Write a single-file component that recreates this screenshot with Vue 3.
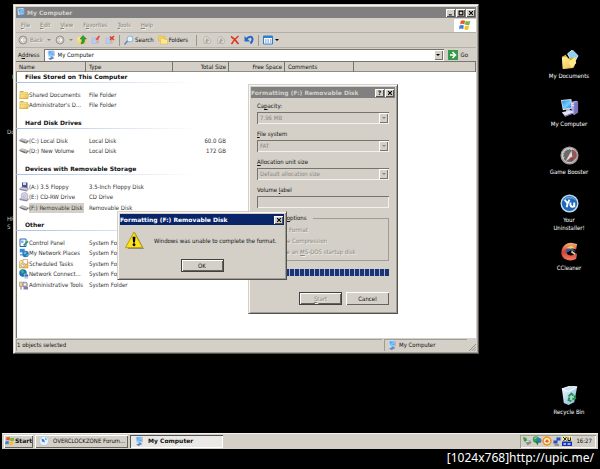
<template>
  <div class="screen">
    <svg class="sprite" aria-hidden="true">
      <defs>
        <linearGradient id="g-screen" x1="0" y1="0" x2="1" y2="1">
          <stop offset="0" stop-color="#2f7fe0" />
          <stop offset="0.55" stop-color="#6fd0fb" />
          <stop offset="1" stop-color="#2a6fd0" />
        </linearGradient>
        <linearGradient id="g-folder" x1="0" y1="0" x2="1" y2="1">
          <stop offset="0" stop-color="#fff3a0" />
          <stop offset="1" stop-color="#e8b840" />
        </linearGradient>
        <linearGradient id="g-bin" x1="0" y1="0" x2="1" y2="1">
          <stop offset="0" stop-color="#f4fbff" />
          <stop offset="1" stop-color="#7fb0dd" />
        </linearGradient>
        <linearGradient id="g-cc" x1="0" y1="0" x2="0" y2="1">
          <stop offset="0" stop-color="#f3b27c" />
          <stop offset="0.5" stop-color="#d8412a" />
          <stop offset="1" stop-color="#f07a68" />
        </linearGradient>
      </defs>

      <symbol id="computer" viewBox="0 0 20 20">
        <path d="M12 4l5-1 2 1v11l-4 3-3-2z" fill="#a9a4e0" />
        <path d="M15 5l4-1v11l-4 3z" fill="#7a74bd" />
        <path d="M12.500 6h2M12.500 8h2" stroke="#f5f4ff" />
        <path d="M1 2l11-1 1 10-10 2z" fill="#dcdff5" />
        <path d="M2 3l9-1 1 8-8.500 1.500z" fill="url(#g-screen)" />
        <path d="M6 12l4-1 1 3-4 1z" fill="#b8b6dd" />
        <path d="M2 15l9-2 4 2-10 4z" fill="#e2e2f4" />
        <path d="M5 19l10-4v1l-10 4z" fill="#8884bb" />
      </symbol>
      <symbol id="monitor" viewBox="0 0 20 20">
        <path d="M3 1l12-1 1 12-12 2z" fill="#cfdcf2" />
        <path d="M5 3l9-1 1 8-9 2z" fill="url(#g-screen)" />
        <path d="M15 1l2 2v9l-2 1z" fill="#8c9bc8" />
        <path d="M8 13l5-1 1 3-4 1z" fill="#7d9cd0" />
        <path d="M4 17l9-3 4 2-8 4z" fill="#5e86c4" />
      </symbol>
      <symbol id="folder" viewBox="0 0 20 20">
        <path d="M1 4l2-2h5l2 2h8v13h-16z" fill="#d9ab3c" />
        <path d="M2 5h15v11h-14z" fill="#fdf1a4" />
        <path d="M1 17l2-9h16l-1 9z" fill="url(#g-folder)" stroke="#c89a30" />
      </symbol>
      <symbol id="documents" viewBox="0 0 20 20">
        <path d="M8 4l5-4 6 6-5 9z" fill="#8fd0ee" stroke="#d4f0fb" />
        <path d="M2 7l4-2 3 4 4-1 3 3-1 7-12 2z" fill="#d9a935" />
        <path d="M2 8l4-1 10 7-2 5-11 1z" fill="url(#g-folder)" />
        <path d="M9 13l7-6 1 7-5 5z" fill="#ffe98a" />
      </symbol>
      <symbol id="gauge" viewBox="0 0 20 20">
        <circle cx="10" cy="10" r="9.500" fill="#9a9a9a" />
        <circle cx="10" cy="10" r="7.500" fill="#6a6a6a" stroke="#d8d8d8" />
        <path d="M4 13a6.500 6.500 0 0 1 9-9" fill="none" stroke="#c9c9c9" stroke-width="2" stroke-dasharray="2 1" />
        <path d="M14 5a6.500 6.500 0 0 1 2 8" fill="none" stroke="#c94040" stroke-width="2" />
        <path d="M6 16l6-11 1 6z" fill="#f2d7d7" />
        <path d="M10 12l2 5 2-4z" fill="#a33" />
      </symbol>
      <symbol id="uninstaller" viewBox="0 0 20 20">
        <circle cx="10" cy="10" r="9.500" fill="#c3d8ea" />
        <circle cx="10" cy="10" r="8" fill="#1b68b8" />
        <path d="M3 7a8 8 0 0 1 14 0 12 12 0 0 0-14 0z" fill="#63a9e0" />
        <path d="M5 6l3 4 2-4M8 10l-1 4M11 9v3q2 3 4 0v-3M15 12v2" fill="none" stroke="#fff" stroke-width="2" />
      </symbol>
      <symbol id="ccleaner" viewBox="0 0 20 20">
        <path d="M18 2l-1 6-4-1q-5-1-6 3 0 5 6 4l5-2-1 6q-6 3-12 0-5-4-3-10 3-8 11-7z" fill="url(#g-cc)" />
        <path d="M6 8l6-2 5 4-6-1-5 3z" fill="#3557a5" />
        <path d="M7 6l5-2 3 2-4 1z" fill="#f1d24c" />
        <path d="M12 10l4 3" stroke="#e8c89a" stroke-width="2" />
      </symbol>
      <symbol id="bin" viewBox="0 0 20 20">
        <path d="M2 3l7 2 9-4-3 16-6 3-5-2z" fill="url(#g-bin)" />
        <path d="M2 3l9-3 7 1-9 5z" fill="#c7e3f6" stroke="#fff" />
        <path d="M9 11l3-3 2 2M15 10l1 3-3 1M12 16l-3-1 1-3" fill="none" stroke="#1d9a38" stroke-width="2" />
      </symbol>
      <symbol id="drive" viewBox="0 0 20 20">
        <path d="M1 8l5-3 13 4v2l-4 4-5-1-9-4z" fill="#6e6e6e" />
        <path d="M1 8l5-3 13 4-5 3z" fill="#c4c4c4" />
        <path d="M12 13h3" stroke="#7d9a7d" stroke-width="2" />
      </symbol>
      <symbol id="floppy" viewBox="0 0 20 20">
        <path d="M6 1h11v11h-11z" fill="#4a4f9c" />
        <path d="M8 1h6v5h-6z" fill="#d7daf3" />
        <path d="M1 13l5-4 13 3v3l-4 4-14-3z" fill="#8f8fa8" />
        <path d="M1 13l5-2 13 2-4 3z" fill="#cfcfdf" />
      </symbol>
      <symbol id="cd" viewBox="0 0 20 20">
        <circle cx="11" cy="8" r="7" fill="#d8d8ea" stroke="#8c8cae" />
        <circle cx="11" cy="8" r="2" fill="#fff" stroke="#7c7c9c" />
        <path d="M1 13l5-2 13 2v3l-4 3-14-3z" fill="#8b8ba4" />
        <path d="M1 13l5-2 13 2-4 3z" fill="#c9c9da" />
      </symbol>
      <symbol id="panel" viewBox="0 0 20 20">
        <path d="M2 2h12v15h-12z" fill="#fff" stroke="#2c62b5" stroke-width="2" />
        <path d="M4 5h5v5h-5z" fill="#7db4ec" />
        <path d="M8 14l9-9 2 3-8 8z" fill="#2c9b6a" />
      </symbol>
      <symbol id="network" viewBox="0 0 20 20">
        <path d="M1 1h11v9h-11z" fill="#b9cfef" />
        <path d="M2 2h9v6h-9z" fill="#2f8ae0" />
        <circle cx="13" cy="12" r="6.500" fill="#2a76cc" />
        <path d="M9 9q4-4 6 0 0 4-4 4zM14 14l4-2q0 4-3 5z" fill="#56c7c5" />
        <path d="M2 12h5v3h-5z" fill="#7896c6" />
      </symbol>
      <symbol id="tasks" viewBox="0 0 20 20">
        <path d="M1 5l2-2h5l2 2h8v13h-17z" fill="url(#g-folder)" stroke="#b98a20" />
        <path d="M8 1h9v9h-9z" fill="#fff" stroke="#c06a2a" />
        <circle cx="8" cy="12" r="4" fill="#fdfdfd" stroke="#777" />
        <path d="M8 10v2h2" stroke="#b22" fill="none" />
      </symbol>
      <symbol id="connections" viewBox="0 0 20 20">
        <circle cx="8" cy="8" r="7.500" fill="#1e74b8" />
        <path d="M3 4q5-4 7 1-1 5-4 4zM9 10l4-3q2 4-2 7z" fill="#44b07e" />
        <path d="M10 10h9v7h-9z" fill="#cad9f2" />
        <path d="M11 11h7v4h-7z" fill="#2a6fd0" />
        <path d="M11 18h7" stroke="#667" />
      </symbol>
      <symbol id="tools" viewBox="0 0 20 20">
        <path d="M1 4h9v9h-9z" fill="#e0cf9a" stroke="#95814d" />
        <circle cx="12" cy="9" r="5" fill="#b9b9cf" stroke="#6e6e8c" />
        <circle cx="12" cy="9" r="2" fill="#fff" />
        <path d="M9 13h9v6h-9z" fill="#8d76b0" />
        <path d="M4 13v6" stroke="#887a52" stroke-width="2" />
      </symbol>
      <symbol id="flag" viewBox="0 0 20 20">
        <path d="M3 3q4-2 7 0l-1 6q-4-2-7 0z" fill="#e8562a" />
        <path d="M11 3q4 2 8 0l-2 7q-4 1-7-1z" fill="#7db833" />
        <path d="M1 11q4-2 7 0l-1 6q-4-2-7 0z" fill="#3c7fd8" />
        <path d="M10 11q3 2 7 0l-2 7q-4 1-6-1z" fill="#f4c128" />
      </symbol>
      <symbol id="back" viewBox="0 0 20 20">
        <circle cx="10" cy="10" r="8" fill="#c9c6be" stroke="#98958c" stroke-width="2" />
        <path d="M11 5l-5 5 5 5M6 10h9" fill="none" stroke="#fff" stroke-width="2" />
      </symbol>
      <symbol id="forward" viewBox="0 0 20 20">
        <circle cx="10" cy="10" r="8" fill="#c9c6be" stroke="#98958c" stroke-width="2" />
        <path d="M9 5l5 5-5 5M14 10h-9" fill="none" stroke="#fff" stroke-width="2" />
      </symbol>
      <symbol id="up" viewBox="0 0 20 20">
        <path d="M1 6l2-2h5l2 2h7v12h-16z" fill="url(#g-folder)" />
        <path d="M12 1l7 7h-4q1 8-5 10l-2-1q3-4 2-9h-4z" fill="#2fa32f" stroke="#16701a" />
      </symbol>
      <symbol id="cut" viewBox="0 0 20 20">
        <path d="M2 6h9v11h-9z" fill="#b9cdf0" stroke="#9fb3dc" />
        <path d="M9 9l6-8 3 1-4 9z" fill="#e05548" />
        <path d="M13 8l4 8-5 1z" fill="#e9a09a" />
      </symbol>
      <symbol id="cut-x" viewBox="0 0 20 20">
        <path d="M2 6h9v11h-9z" fill="#b9cdf0" stroke="#9fb3dc" />
        <path d="M13 8l3 8-4 1z" fill="#e9a09a" />
        <path d="M10 3l8 7M18 2l-8 8" stroke="#d83a2c" stroke-width="3" />
      </symbol>
      <symbol id="search" viewBox="0 0 20 20">
        <circle cx="12" cy="8" r="6" fill="#e3f3ff" stroke="#8fb2d6" stroke-width="2" />
        <path d="M7 12l-6 7" stroke="#5f86b5" stroke-width="3" />
      </symbol>
      <symbol id="folders" viewBox="0 0 20 20">
        <path d="M1 3l2-2h4l2 2h5v9h-13z" fill="#f1cf5c" stroke="#d9b04a" />
        <path d="M5 9l2-2h4l2 2h6v9h-14z" fill="#fbe98c" stroke="#d9b04a" />
      </symbol>
      <symbol id="move" viewBox="0 0 20 20">
        <path d="M3 8l3-5h5l2 4 5 3-2 7h-12z" fill="#dcd9d2" stroke="#a19e96" />
        <path d="M9 6l6 6h-4v4h-4v-4" fill="#aaa79f" />
      </symbol>
      <symbol id="delete" viewBox="0 0 20 20">
        <path d="M2 3q8 5 15 15M17 2q-8 6-14 16" fill="none" stroke="#e0331c" stroke-width="3" />
      </symbol>
      <symbol id="undo" viewBox="0 0 20 20">
        <path d="M5 8q5-6 10-4 5 5-2 13" fill="none" stroke="#2b66c9" stroke-width="4" />
        <path d="M1 2v11h11z" fill="#2b66c9" />
      </symbol>
      <symbol id="views" viewBox="0 0 20 20">
        <path d="M1 2h18v16h-18z" fill="#fff" stroke="#2f80cc" stroke-width="2" />
        <path d="M1 2h18v4h-18z" fill="#2f80cc" />
        <path d="M4 10h3M9 10h3M14 10h3M4 14h3M9 14h3M14 14h3" stroke="#3b88cf" stroke-width="2" />
      </symbol>
      <symbol id="go" viewBox="0 0 20 20">
        <path d="M0 0h20v20h-20z" fill="#37994a" />
        <path d="M4 10h10M9 4l6 6-6 6" fill="none" stroke="#fff" stroke-width="3" />
      </symbol>
      <symbol id="warning" viewBox="0 0 20 20">
        <path d="M11 2l9 17h-17z" fill="#8d8a80" />
        <path d="M9.500 1l9 16.500h-18z" fill="#fbe21b" stroke="#b79a10" stroke-linejoin="round" />
        <path d="M8 6h3l-.5 6h-2z" fill="#000" />
        <circle cx="9.500" cy="14.500" r="1.500" fill="#000" />
      </symbol>
      <symbol id="browser" viewBox="0 0 20 20">
        <circle cx="10" cy="10" r="9" fill="#e9f3fd" stroke="#a5bdd8" />
        <path d="M5 5l5 2 2 6-6-2zM12 3l4 4-3 1z" fill="#2f82d4" />
      </symbol>
      <symbol id="plug" viewBox="0 0 20 20">
        <path d="M2 2l7 2 1 6-6 1z" fill="#35a23c" />
        <path d="M6 10l10-2 3 6-8 5z" fill="#8a8d90" />
        <path d="M8 11l7-1" stroke="#f1f1f1" stroke-width="2" />
      </symbol>
      <symbol id="idm" viewBox="0 0 20 20">
        <circle cx="8" cy="7" r="6.500" fill="#2fa45a" />
        <circle cx="14" cy="9" r="5" fill="#3c74c8" />
        <path d="M6 10h8l-3 9z" fill="#1d8a2e" />
        <path d="M5 5l4-2" stroke="#d7f4b4" stroke-width="2" />
      </symbol>
      <symbol id="guard" viewBox="0 0 20 20">
        <circle cx="10" cy="10" r="9.500" fill="#f0952a" />
        <circle cx="10" cy="10" r="6" fill="#fff3d0" />
        <path d="M6 11l4-5 4 5-4 3z" fill="#d8701a" />
      </symbol>
      <symbol id="lan" viewBox="0 0 20 20">
        <path d="M7 1h12v10h-12zM1 7h12v10h-12z" fill="#c3cbe2" />
        <path d="M9 3h8v6h-8zM3 9h8v6h-8z" fill="#2f4fb0" />
        <path d="M5 18h9" stroke="#555" stroke-width="2" />
      </symbol>
      <symbol id="monitoring" viewBox="0 0 20 20">
        <path d="M0 0h20v20h-20z" fill="#ece6a0" />
        <path d="M0 11h20v9h-20z" fill="#1a2fb8" />
        <path d="M2 2l7 7M9 2l-6 8M12 3v6h5v-6" stroke="#222" stroke-width="2" fill="none" />
        <path d="M3 16h5M11 16h6" stroke="#cfe0ff" stroke-width="3" />
      </symbol>
    </svg>

    <main class="desktop">
      <span class="behind behind-1">I</span>
      <span class="behind behind-2">Do</span>
      <span class="behind behind-3">HP<br />S</span>

      <nav class="shortcuts">
        <a
          v-for="item in shortcuts"
          :key="item.icon"
          href="#"
          :class="['shortcut', { last: item.icon === 'bin' }]"
        >
          <svg><use :href="`#${item.icon}`" /></svg>
          <span>{{ item.label }}</span>
        </a>
      </nav>

      <section class="window explorer">
        <header class="title inactive">
          <svg class="icon"><use href="#monitor" /></svg>
          <h1>My Computer</h1>
          <button class="caption" aria-label="Minimize">
            <svg viewBox="0 0 8 8"><path d="M1 6.500h4" /></svg>
          </button>
          <button class="caption" aria-label="Maximize">
            <svg viewBox="0 0 8 8"><path d="M1 1.500h6M1.500 1v6M6.500 1v6M1 6.500h6" /></svg>
          </button>
          <button class="caption" aria-label="Close">
            <svg viewBox="0 0 8 8"><path d="M1.500 1.500l5 5M6.500 1.500l-5 5" /></svg>
          </button>
        </header>

        <div class="menubar">
          <button v-for="m in menus" :key="m.rest" class="menu">
            {{ m.pre }}<u>{{ m.key }}</u>{{ m.rest }}
          </button>
          <span class="throbber"><svg><use href="#flag" /></svg></span>
        </div>

        <div class="toolbar">
          <button class="tool disabled">
            <svg class="icon"><use href="#back" /></svg>Back
          </button>
          <i class="arrow dim"></i>
          <button class="tool" aria-label="Forward"><svg class="icon"><use href="#forward" /></svg></button>
          <i class="arrow dim"></i>
          <button class="tool" aria-label="Up"><svg class="icon"><use href="#up" /></svg></button>
          <button class="tool" aria-label="Map drive"><svg class="icon"><use href="#cut" /></svg></button>
          <button class="tool" aria-label="Disconnect"><svg class="icon"><use href="#cut-x" /></svg></button>
          <i class="sep"></i>
          <button class="tool label"><svg class="icon"><use href="#search" /></svg>Search</button>
          <button class="tool label"><svg class="icon"><use href="#folders" /></svg>Folders</button>
          <i class="sep wide"></i>
          <button class="tool" aria-label="Move to"><svg class="icon"><use href="#move" /></svg></button>
          <button class="tool" aria-label="Copy to"><svg class="icon"><use href="#move" /></svg></button>
          <button class="tool" aria-label="Delete"><svg class="icon"><use href="#delete" /></svg></button>
          <button class="tool" aria-label="Undo"><svg class="icon"><use href="#undo" /></svg></button>
          <i class="sep"></i>
          <button class="tool" aria-label="Views">
            <svg class="icon"><use href="#views" /></svg><i class="arrow"></i>
          </button>
        </div>

        <div class="address">
          <label for="address">A<u>d</u>dress</label>
          <div class="address-box">
            <svg class="icon"><use href="#monitor" /></svg>
            <input id="address" type="text" value="My Computer" />
            <button class="drop" aria-label="Show addresses"><i class="arrow"></i></button>
          </div>
          <button class="go"><svg class="icon"><use href="#go" /></svg>Go</button>
        </div>

        <div class="files">
          <table>
            <colgroup>
              <col class="c-name" />
              <col class="c-type" />
              <col class="c-size" />
              <col class="c-free" />
              <col class="c-comments" />
              <col />
            </colgroup>
            <thead>
              <tr>
                <th>Name</th>
                <th>Type</th>
                <th class="num">Total Size</th>
                <th class="num">Free Space</th>
                <th>Comments</th>
                <th></th>
              </tr>
            </thead>
            <tbody v-for="group in groups" :key="group.title">
              <tr class="group">
                <th colspan="6"><span>{{ group.title }}</span></th>
              </tr>
              <tr v-for="row in group.rows" :key="row.name" class="row">
                <td>
                  <div :class="['name', { selected: row.selected }]">
                    <svg class="icon"><use :href="`#${row.icon}`" /></svg>
                    <span>{{ row.name }}</span>
                  </div>
                </td>
                <td>{{ row.type }}</td>
                <td class="num">{{ row.size }}</td>
                <td></td>
                <td></td>
                <td></td>
              </tr>
            </tbody>
          </table>
        </div>

        <footer class="status">
          <span class="status-text">1 objects selected</span>
          <span class="status-zone"><svg class="icon"><use href="#monitor" /></svg>My Computer</span>
          <svg class="grip" viewBox="0 0 8 8"><path d="M0 8l8-8M3 8l5-5M6 8l2-2" /></svg>
        </footer>
      </section>

      <section class="window format">
        <header class="title inactive">
          <h2>Formatting (F:) Removable Disk</h2>
          <button class="caption" aria-label="Help">?</button>
          <button class="caption" aria-label="Close">
            <svg viewBox="0 0 8 8"><path d="M1.500 1.500l5 5M6.500 1.500l-5 5" /></svg>
          </button>
        </header>
        <form class="format-body" @submit.prevent>
          <div v-for="field in fields" :key="field.id" class="field">
            <label :for="field.id">{{ field.pre }}<u>{{ field.key }}</u>{{ field.rest }}</label>
            <div class="select">
              <select :id="field.id" disabled>
                <option>{{ field.value }}</option>
              </select>
              <span class="drop"><i class="arrow dim"></i></span>
            </div>
          </div>
          <div class="field">
            <label for="volume">Volume <u>l</u>abel</label>
            <input id="volume" class="volume" type="text" disabled />
          </div>
          <fieldset>
            <legend>Format <u>o</u>ptions</legend>
            <label v-for="o in options" :key="o.rest">
              <input type="checkbox" disabled />{{ o.pre }}<u>{{ o.key }}</u>{{ o.rest }}
            </label>
          </fieldset>
          <div class="progress" role="progressbar" aria-valuenow="100"></div>
          <div class="actions">
            <button class="push default" disabled><u>S</u>tart</button>
            <button class="push">Cancel</button>
          </div>
        </form>
      </section>

      <section class="window message" role="alertdialog">
        <header class="title">
          <h2>Formatting (F:) Removable Disk</h2>
          <button class="caption" aria-label="Close">
            <svg viewBox="0 0 8 8"><path d="M1.500 1.500l5 5M6.500 1.500l-5 5" /></svg>
          </button>
        </header>
        <div class="message-body">
          <svg class="warning"><use href="#warning" /></svg>
          <p>Windows was unable to complete the format.</p>
        </div>
        <button class="push default">OK</button>
      </section>
    </main>

    <footer class="taskbar">
      <button class="start"><svg class="icon"><use href="#flag" /></svg>Start</button>
      <button class="task"><svg class="icon"><use href="#browser" /></svg>OVERCLOCKZONE Forum...</button>
      <button class="task pressed"><svg class="icon"><use href="#monitor" /></svg>My Computer</button>
      <div class="tray">
        <svg v-for="t in tray" :key="t" class="icon"><use :href="`#${t}`" /></svg>
        <time>16:27</time>
      </div>
    </footer>

    <div class="credit">[1024x768]http://upic.me/</div>
  </div>
</template>

<script setup>
const shortcuts = [
  { icon: 'documents', label: 'My Documents' },
  { icon: 'computer', label: 'My Computer' },
  { icon: 'gauge', label: 'Game Booster' },
  { icon: 'uninstaller', label: 'Your Uninstaller!' },
  { icon: 'ccleaner', label: 'CCleaner' },
  { icon: 'bin', label: 'Recycle Bin' },
];

const menus = [
  { pre: '', key: 'F', rest: 'ile' },
  { pre: '', key: 'E', rest: 'dit' },
  { pre: '', key: 'V', rest: 'iew' },
  { pre: 'F', key: 'a', rest: 'vorites' },
  { pre: '', key: 'T', rest: 'ools' },
  { pre: '', key: 'H', rest: 'elp' },
];

const groups = [
  {
    title: 'Files Stored on This Computer',
    rows: [
      { icon: 'folder', name: 'Shared Documents', type: 'File Folder' },
      { icon: 'folder', name: "Administrator's D...", type: 'File Folder' },
    ],
  },
  {
    title: 'Hard Disk Drives',
    rows: [
      { icon: 'drive', name: '(C:) Local Disk', type: 'Local Disk', size: '60.0 GB' },
      { icon: 'drive', name: '(D:) New Volume', type: 'Local Disk', size: '172 GB' },
    ],
  },
  {
    title: 'Devices with Removable Storage',
    rows: [
      { icon: 'floppy', name: '(A:) 3.5 Floppy', type: '3.5-Inch Floppy Disk' },
      { icon: 'cd', name: '(E:) CD-RW Drive', type: 'CD Drive' },
      { icon: 'drive', name: '(F:) Removable Disk', type: 'Removable Disk', selected: true },
    ],
  },
  {
    title: 'Other',
    rows: [
      { icon: 'panel', name: 'Control Panel', type: 'System Folder' },
      { icon: 'network', name: 'My Network Places', type: 'System Folder' },
      { icon: 'tasks', name: 'Scheduled Tasks', type: 'System Folder' },
      { icon: 'connections', name: 'Network Connect...', type: 'System Folder' },
      { icon: 'tools', name: 'Administrative Tools', type: 'System Folder' },
    ],
  },
];

const fields = [
  { id: 'capacity', pre: 'Ca', key: 'p', rest: 'acity:', value: '7.96 MB' },
  { id: 'filesystem', pre: '', key: 'F', rest: 'ile system', value: 'FAT' },
  { id: 'allocation', pre: '', key: 'A', rest: 'llocation unit size', value: 'Default allocation size' },
];

const options = [
  { pre: '', key: 'Q', rest: 'uick Format' },
  { pre: '', key: 'E', rest: 'nable Compression' },
  { pre: 'Create an ', key: 'M', rest: 'S-DOS startup disk' },
];

const tray = ['plug', 'idm', 'guard', 'lan', 'monitoring'];
</script>

<style>
body {
  background: #000;
}
</style>

<style scoped>
.screen {
  display: flex;
  flex-direction: column;
  height: 100vh;
  background: #000;
  color: #111;
  font-family: 'DejaVu Sans Condensed', 'DejaVu Sans', sans-serif;
  font-size: 6px;
  line-height: 8px;
}

.sprite {
  position: absolute;
  width: 0;
  height: 0;
}

button,
input,
select {
  margin: 0;
  padding: 0;
  border: 0;
  background: none;
  color: inherit;
  font: inherit;
}

h1,
h2,
p {
  margin: 0;
  font-size: inherit;
}

.icon {
  flex: none;
  width: 10px;
  height: 10px;
}

.arrow {
  flex: none;
  border: 2px solid transparent;
  border-top-color: #000;
  border-bottom-width: 0;
}

.arrow.dim {
  border-top-color: #8a877f;
}

.desktop {
  position: relative;
  flex: 1;
  min-height: 0;
}

/* labels of icons that the explorer window mostly hides */
.behind {
  position: absolute;
  left: 7px;
  color: #ccc;
}

.behind-1 {
  top: 73px;
  left: 12px;
}

.behind-2 {
  top: 128px;
}

.behind-3 {
  top: 215px;
}

.shortcuts {
  display: grid;
  grid-auto-rows: 48px;
  justify-content: end;
  padding: 50px 1px 0 0;
}

.shortcut {
  display: flex;
  flex-direction: column;
  align-items: center;
  gap: 3px;
  width: 60px;
  color: #fff;
  text-align: center;
  text-decoration: none;
}

.shortcut svg {
  width: 19px;
  height: 19px;
}

.shortcut span {
  max-width: 44px;
}

.shortcut.last {
  grid-row: 8;
}

.window {
  position: absolute;
  box-sizing: border-box;
  display: flex;
  flex-direction: column;
  padding: 2px;
  border: 1px solid;
  border-color: #d4d0c8 #55534f #55534f #d4d0c8;
  background: #d4d0c8;
  box-shadow: inset 1px 1px #f8f7f4, inset -1px -1px #a09d96;
}

.title {
  display: flex;
  flex: none;
  align-items: center;
  gap: 1px;
  height: 11px;
  padding: 0 1px 0 0;
  background: #0a246a;
  color: #fff;
}

.title.inactive {
  background: #808080;
  color: #d4d0c8;
}

.title h1,
.title h2 {
  flex: 1;
  white-space: nowrap;
}

/* the wider face is used wherever the text is bold */
.title h1,
.title h2,
.group span,
.start,
.pressed {
  font-family: 'DejaVu Sans', sans-serif;
  font-weight: bold;
}

.caption {
  display: flex;
  align-items: center;
  justify-content: center;
  width: 9px;
  height: 8px;
  background: #d4d0c8;
  box-shadow: inset 1px 1px #fff, inset -1px -1px #55534f;
  color: #000;
  font-weight: bold;
}

.caption svg {
  width: 6px;
  height: 6px;
  fill: none;
  stroke: #000;
  stroke-width: 1.5;
}

.explorer {
  top: 4px;
  right: 121px;
  bottom: 79px;
  left: 13px;
}

.menubar {
  display: flex;
  flex: none;
  align-items: center;
  gap: 10px;
  height: 14px;
  padding-left: 5px;
  border-bottom: 1px solid #b4b0a8;
}

.menu {
  color: #85827a;
  text-shadow: 1px 1px #f0eeea;
}

.throbber {
  display: flex;
  align-items: center;
  justify-content: center;
  width: 22px;
  height: 13px;
  margin-left: auto;
  background: #fff;
}

.throbber svg {
  width: 12px;
  height: 12px;
}

.toolbar {
  display: flex;
  flex: none;
  align-items: center;
  gap: 4px;
  height: 14px;
  padding-left: 2px;
  border-bottom: 1px solid #b4b0a8;
}

.tool {
  display: flex;
  align-items: center;
  gap: 2px;
}

.tool.label {
  gap: 1px;
}

.tool.disabled {
  color: #8a877f;
  text-shadow: 1px 1px #f0eeea;
}

.sep {
  width: 1px;
  height: 11px;
  background: #9a978f;
}

.sep.wide {
  margin: 0 1px 0 4px;
}

.address {
  display: flex;
  flex: none;
  align-items: center;
  gap: 4px;
  height: 13px;
  padding: 0 8px 0 2px;
}

.address-box {
  display: flex;
  flex: 1;
  align-items: center;
  gap: 2px;
  height: 12px;
  padding: 0 1px 0 2px;
  background: #fff;
  box-shadow: inset 1px 1px #77746d;
}

.address-box input {
  flex: 1;
  min-width: 0;
}

.drop {
  display: flex;
  align-items: center;
  justify-content: center;
  width: 9px;
  height: 10px;
  background: #d4d0c8;
  box-shadow: inset 1px 1px #fff, inset -1px -1px #77746d;
}

.go {
  display: flex;
  align-items: center;
  gap: 3px;
}

.files {
  flex: 1;
  min-height: 0;
  overflow: hidden;
  background: #fff;
  box-shadow: inset 1px 1px #77746d;
}

table {
  width: 100%;
  border-spacing: 0;
  table-layout: fixed;
}

.c-name {
  width: 70px;
}

.c-type {
  width: 87px;
}

.c-size,
.c-free {
  width: 56px;
}

.c-comments {
  width: 69px;
}

th,
td {
  padding: 0 3px;
  text-align: left;
  white-space: nowrap;
}

.num {
  text-align: right;
}

thead th {
  height: 11px;
  background: #d4d0c8;
  box-shadow: inset -1px 0 #77746d, inset 0 -1px #8e8b84, inset 0 1px #77746d;
  font-weight: normal;
}

.group th {
  height: 18px;
  padding: 0;
  vertical-align: top;
}

tbody + tbody .group th {
  padding-top: 7px;
}

.group span {
  display: block;
  width: 170px;
  padding-left: 9px;
  border-bottom: 1px solid;
  border-image: linear-gradient(to right, #a9bfdc, #fff) 1;
  line-height: 10px;
}

.row td {
  height: 10px;
  color: #333;
  line-height: 10px;
  vertical-align: top;
}

.row:nth-child(odd) td {
  height: 11px;
}

td:first-child {
  padding-right: 0;
}

.name {
  display: flex;
  align-items: center;
}

.name span {
  padding-right: 1px;
}

.selected span {
  background: #d4d0c8;
}

.status {
  display: flex;
  flex: none;
  align-items: stretch;
  gap: 2px;
  height: 12px;
  padding-top: 1px;
}

.status-text,
.status-zone {
  display: flex;
  align-items: center;
  gap: 2px;
  padding-left: 1px;
  box-shadow: inset 1px 1px #a09d96;
}

.status-text {
  flex: 1;
}

.status-zone {
  width: 80px;
  padding-left: 3px;
}

.grip {
  align-self: flex-end;
  width: 7px;
  height: 7px;
  fill: none;
  stroke: #8a877f;
}

.format {
  top: 84px;
  left: 248px;
  width: 150px;
}

.format-body {
  display: flex;
  flex-direction: column;
  padding: 4px 6px 6px;
}

.field {
  display: flex;
  flex-direction: column;
  gap: 2px;
  margin-bottom: 6px;
}

.select {
  display: flex;
  align-items: center;
  height: 12px;
  padding: 0 1px;
  box-shadow: inset 1px 1px #77746d, inset -1px -1px #f4f2ee;
}

.select select {
  flex: 1;
  appearance: none;
  padding-left: 2px;
  color: #8a877f;
  opacity: 1;
}

.volume {
  height: 12px;
  box-shadow: inset 1px 1px #77746d, inset -1px -1px #f4f2ee;
}

fieldset {
  display: flex;
  flex-direction: column;
  gap: 3px;
  min-width: 0;
  margin: 0 0 8px;
  padding: 4px 4px;
  border: 1px solid #a09d96;
}

legend {
  margin-left: 2px;
  padding: 0 6px 0 2px;
}

fieldset label {
  display: flex;
  align-items: center;
  color: #8a877f;
  text-shadow: 1px 1px #f0eeea;
  white-space: pre;
}

fieldset input {
  width: 8px;
  height: 8px;
  margin-right: 2px;
}

.progress {
  height: 7px;
  background: repeating-linear-gradient(to left, #1c3474 0 4px, #a8b4d8 4px 5px);
}

.actions {
  display: flex;
  justify-content: flex-end;
  gap: 4px;
  margin-top: 16px;
}

.push {
  width: 43px;
  height: 13px;
  background: #d4d0c8;
  box-shadow: inset 1px 1px #fff, inset -1px -1px #66635d;
}

.push.default {
  border: 1px solid #44423e;
}

.push:disabled {
  color: #8a877f;
  text-shadow: 1px 1px #f0eeea;
}

.message {
  top: 211px;
  left: 117px;
  width: 170px;
  height: 69px;
}

.message-body {
  display: flex;
  align-items: center;
  gap: 10px;
  padding: 6px 5px 9px;
}

.warning {
  flex: none;
  width: 19px;
  height: 19px;
}

.message p {
  white-space: nowrap;
}

.message .push {
  align-self: center;
}

.taskbar {
  display: flex;
  flex: none;
  align-items: center;
  gap: 2px;
  height: 16px;
  margin: 0 2px;
  padding: 0 2px;
  background: #d4d0c8;
  box-shadow: inset 0 1px #f4f2ee;
}

.start,
.task {
  display: flex;
  align-items: center;
  height: 13px;
  background: #d4d0c8;
  box-shadow: inset 1px 1px #fff, inset -1px -1px #66635d;
  white-space: nowrap;
}

.start {
  padding: 0 1px;
}

.task {
  gap: 4px;
  width: 93px;
  padding: 0 2px 0 4px;
}

.task.pressed {
  background: #ebe9e5;
  box-shadow: inset 1px 1px #55534f, inset -1px -1px #fff;
}

.tray {
  display: flex;
  align-items: center;
  height: 13px;
  margin-left: auto;
  padding: 0 4px 0 2px;
  box-shadow: inset 1px 1px #a09d96, inset -1px -1px #f8f7f4;
}

.tray time {
  margin-left: 4px;
}

.credit {
  flex: none;
  height: 20px;
  padding-right: 6px;
  color: #fff;
  font-family: 'Noto Sans', sans-serif;
  font-size: 12px;
  line-height: 18px;
  text-align: right;
}
</style>
